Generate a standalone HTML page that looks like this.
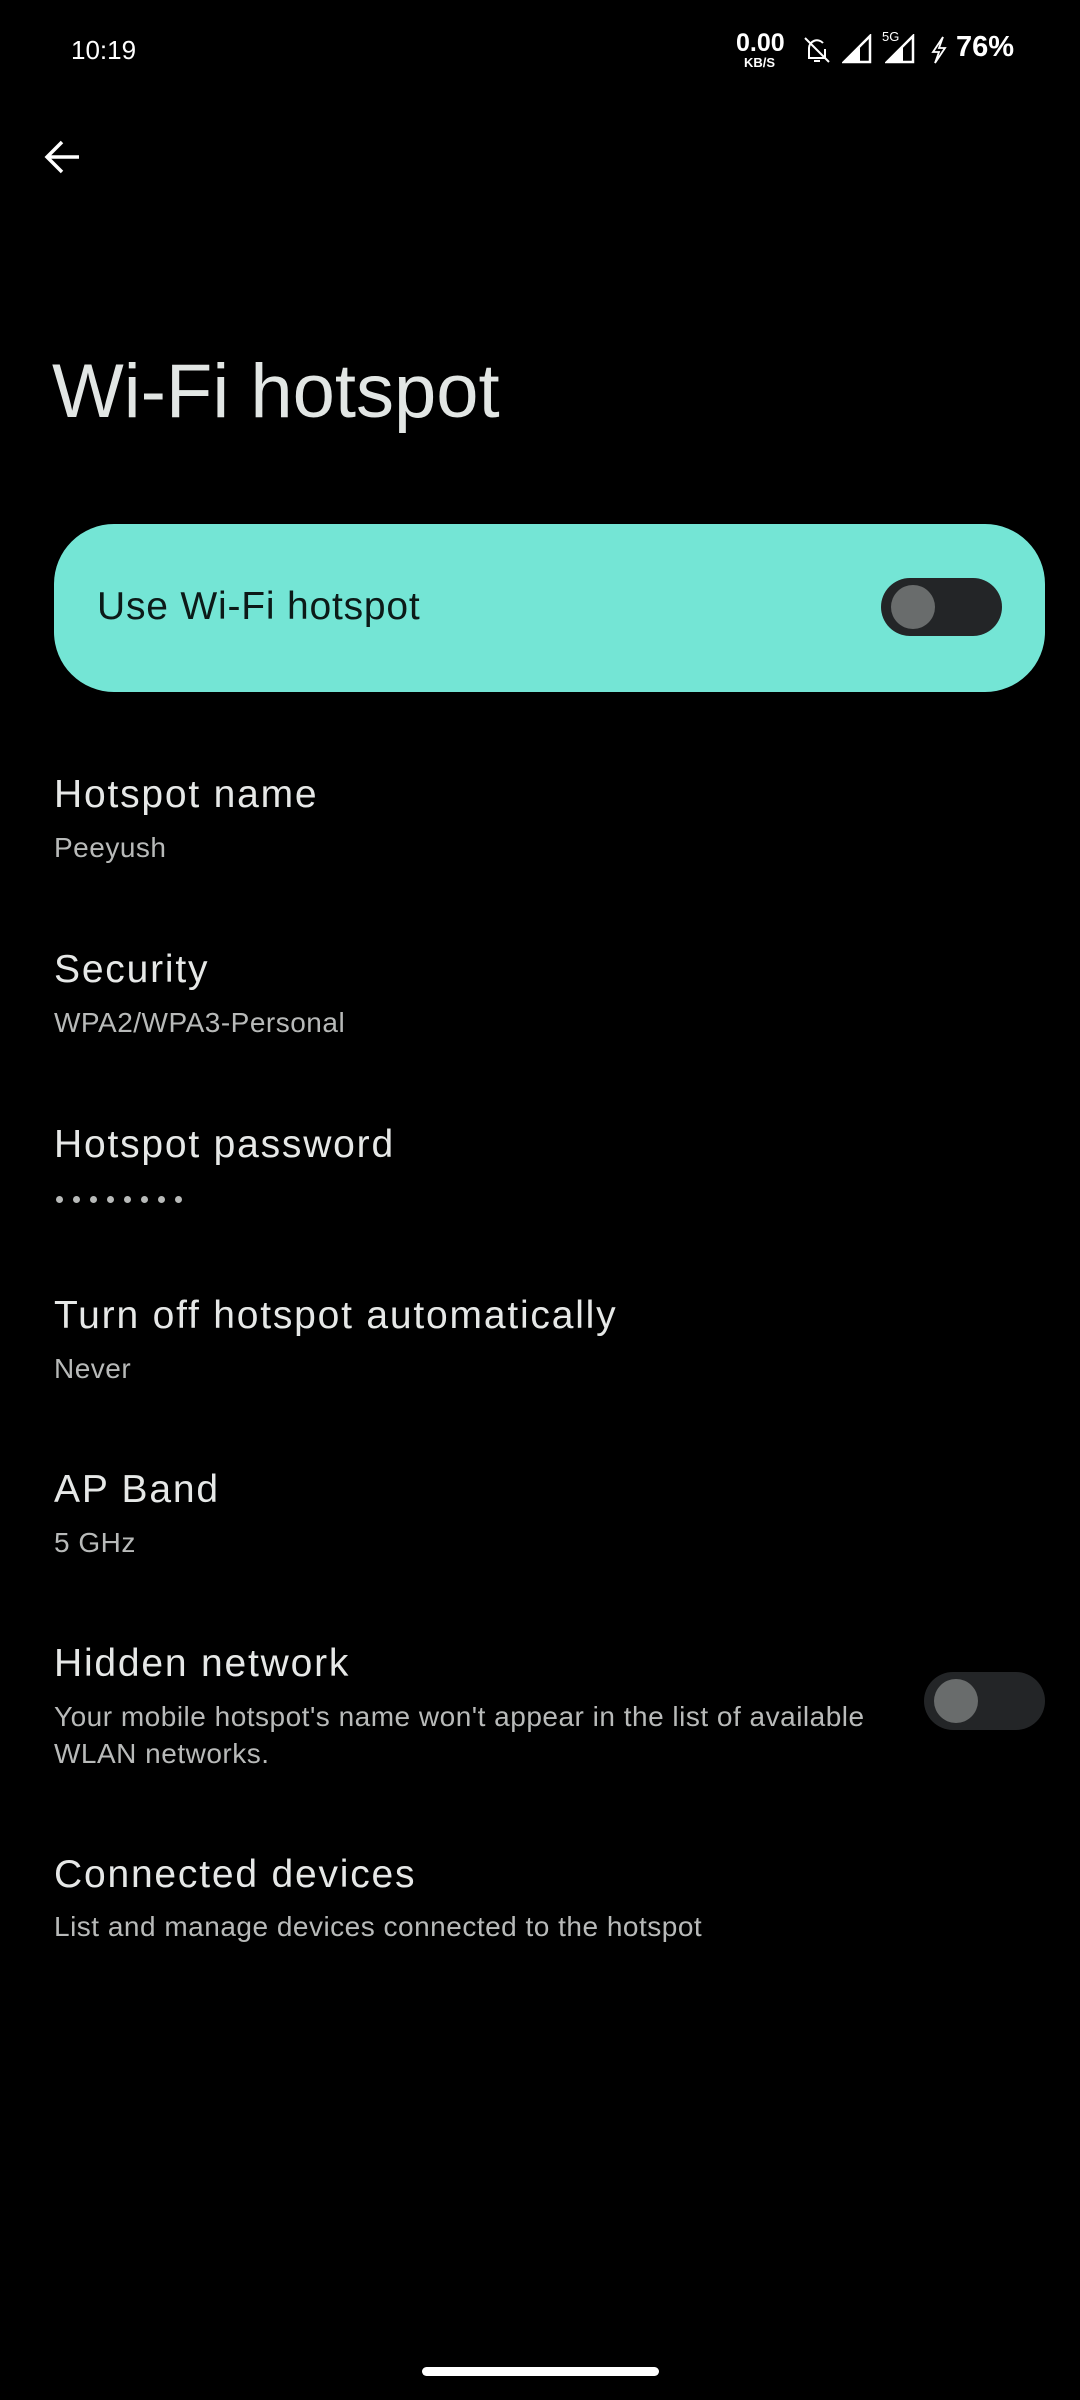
<!DOCTYPE html>
<html><head><meta charset="utf-8"><style>
*{margin:0;padding:0;box-sizing:border-box}
body{width:1080px;height:2400px;background:#000;position:relative;overflow:hidden;font-family:"Liberation Sans",sans-serif;color:#e3e5e4}
.t{position:absolute;white-space:nowrap;line-height:1}
.title{font-size:39px;color:#e6e8e7;left:54px;letter-spacing:1.8px}
.sub{font-size:28px;color:#b8bab9;left:54px;letter-spacing:0.5px}
.sw{position:absolute;width:121px;height:58px;border-radius:29px;background:#232527}
.sw i{position:absolute;left:10px;top:7px;width:44px;height:44px;border-radius:50%;background:#696c6c}
.dots{position:absolute;left:56px;top:1190px}
.dots b{display:inline-block;width:7px;height:7px;border-radius:50%;background:#b8bab9;margin-right:10px}
</style></head><body>
<div class="t" style="left:71px;top:37px;font-size:26px;color:#fff">10:19</div>
<div class="t" style="left:736px;top:31px;font-size:25px;color:#fff;font-weight:bold">0.00</div>
<div class="t" style="left:744px;top:56px;font-size:13px;color:#fff;font-weight:bold">KB/S</div>
<svg style="position:absolute;left:800px;top:33px" width="34" height="34" viewBox="0 0 34 34" fill="none" stroke="#fff" stroke-width="2"><path d="M9 25V15a8 8 0 0 1 14-5M25 16v9H8M14 28h6M5 5l24 24"/></svg>
<svg style="position:absolute;left:842px;top:34px" width="30" height="30"><path d="M2 28L28 2V28Z" fill="none" stroke="#fff" stroke-width="2.5"/><path d="M2 28L18 12V28Z" fill="#fff"/></svg>
<div class="t" style="left:882px;top:30px;font-size:13px;color:#fff">5G</div>
<svg style="position:absolute;left:885px;top:34px" width="30" height="30"><path d="M2 28L28 2V28Z" fill="none" stroke="#fff" stroke-width="2.5"/><path d="M2 28L18 12V28Z" fill="#fff"/></svg>
<svg style="position:absolute;left:930px;top:36px" width="18" height="28"><path d="M13 1L3 16h6l-4 11 10-15H9z" fill="none" stroke="#fff" stroke-width="1.8"/></svg>
<div class="t" style="left:956px;top:33px;font-size:29px;color:#fff;font-weight:bold">76%</div>
<svg style="position:absolute;left:42px;top:138px" width="40" height="38" viewBox="0 0 40 38" fill="none" stroke="#fff" stroke-width="3.5"><path d="M37 19H6M20 4L5 19l15 15"/></svg>
<div class="t" style="left:52px;top:354px;font-size:76px;color:#e2e6e4">Wi-Fi hotspot</div>
<div style="position:absolute;left:54px;top:524px;width:991px;height:168px;border-radius:60px;background:#74e5d5"></div>
<div class="t" style="left:97px;top:587px;font-size:39px;color:#0c1a18;letter-spacing:0.8px">Use Wi-Fi hotspot</div>
<div class="sw" style="left:881px;top:578px"><i></i></div>
<div class="t title" style="top:775px">Hotspot name</div>
<div class="t sub" style="top:834px">Peeyush</div>
<div class="t title" style="top:950px">Security</div>
<div class="t sub" style="top:1009px">WPA2/WPA3-Personal</div>
<div class="t title" style="top:1125px">Hotspot password</div>
<div class="dots"><b></b><b></b><b></b><b></b><b></b><b></b><b></b><b></b></div>
<div class="t title" style="top:1296px">Turn off hotspot automatically</div>
<div class="t sub" style="top:1355px">Never</div>
<div class="t title" style="top:1470px">AP Band</div>
<div class="t sub" style="top:1529px">5 GHz</div>
<div class="t title" style="top:1644px">Hidden network</div>
<div class="t sub" style="top:1698px;line-height:37px">Your mobile hotspot's name won't appear in the list of available<br>WLAN networks.</div>
<div class="sw" style="left:924px;top:1672px"><i></i></div>
<div class="t title" style="top:1855px">Connected devices</div>
<div class="t sub" style="top:1913px">List and manage devices connected to the hotspot</div>
<div style="position:absolute;left:422px;top:2367px;width:237px;height:9px;border-radius:5px;background:#fff"></div>
</body></html>
